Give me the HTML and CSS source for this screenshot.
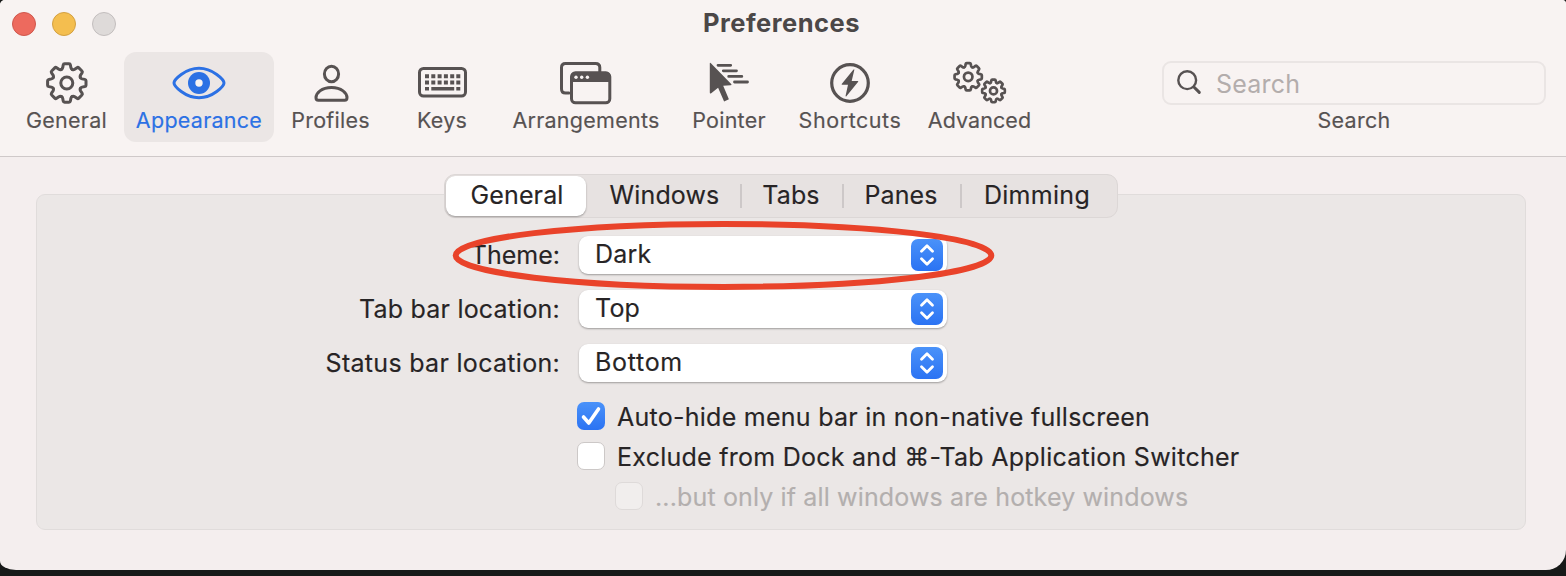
FILE: index.html
```html
<!DOCTYPE html>
<html lang="en">
<head>
<meta charset="utf-8">
<title>Preferences</title>
<link rel="stylesheet" href="styles.css">
</head>
<body>
<svg class="defs" aria-hidden="true">
  <defs>
    <path id="tooth" d="M-5.59-13.49Q-4.4-14-4.1-15.3L-3.6-18Q-3.4-19.2-2.2-19.2H2.2Q3.4-19.2 3.6-18L4.1-15.3Q4.4-14 5.59-13.49"/>
    <g id="gear">
      <use href="#tooth"/><use href="#tooth" transform="rotate(45)"/><use href="#tooth" transform="rotate(90)"/><use href="#tooth" transform="rotate(135)"/>
      <use href="#tooth" transform="rotate(180)"/><use href="#tooth" transform="rotate(225)"/><use href="#tooth" transform="rotate(270)"/><use href="#tooth" transform="rotate(315)"/>
      <circle r="6"/>
    </g>
  </defs>
</svg>
<div class="window">
  <header class="toolbar">
    <div class="titlebar">
      <div class="lights"><i class="light close"></i><i class="light minimize"></i><i class="light zoom"></i></div>
      <h1 class="title">Preferences</h1>
    </div>
    <nav class="items">
      <div class="item">
        <svg width="56" height="48" viewBox="-28 -24 56 48"><g class="line" stroke-width="3"><use href="#gear" x="-.2"/></g></svg>
        <span class="label">General</span>
      </div>
      <div class="item active">
        <svg width="60" height="48" viewBox="0 0 60 48"><path class="line" stroke-width="3" d="M5 24C5 21 16 9.300 30 9.300S55 21 55 24 44 38.700 30 38.700 5 27 5 24Z"/><circle class="solid" cx="30" cy="24" r="11"/><circle class="hole" cx="30" cy="24" r="3.700"/></svg>
        <span class="label">Appearance</span>
      </div>
      <div class="item">
        <svg width="48" height="48" viewBox="0 0 48 48"><ellipse class="line" stroke-width="3" cx="24.500" cy="15" rx="7.100" ry="7.700"/><path class="line" stroke-width="3" d="M11.300 41.300C9.700 41.300 9 40.300 9 38.700 9 34 14.500 28.500 24.500 28.500S40 34 40 38.700C40 40.300 39.300 41.300 37.700 41.300Z"/></svg>
        <span class="label">Profiles</span>
      </div>
      <div class="item">
        <svg width="56" height="48" viewBox="0 0 56 48"><rect class="line" stroke-width="3" x="5.500" y="9.500" width="46" height="27.500" rx="4"/><path class="solid" d="M11 15.300h4v4h-4zM17.300 15.300h4v4h-4zM23.600 15.300h4v4h-4zM29.900 15.300h4v4h-4zM36.200 15.300h4v4h-4zM42.300 15.300h4v4h-4zM11 21.500h4v4h-4zM17.300 21.500h4v4h-4zM23.600 21.500h4v4h-4zM29.900 21.500h4v4h-4zM36.200 21.500h4v4h-4zM42.300 21.500h4v4h-4zM11 28h4v3.600h-4zM17.300 28h22.900v3.600H17.300zM42.300 28h4v3.600h-4z"/></svg>
        <span class="label">Keys</span>
      </div>
      <div class="item">
        <svg width="56" height="48" viewBox="0 0 56 48"><path class="line" stroke-width="3" d="M11 34H7.500Q3.500 34 3.500 30V8.500Q3.500 4.500 7.500 4.500H37.500Q41.800 4.500 41.800 8.500V13"/><rect class="line" stroke-width="3" x="13.500" y="13.800" width="38.300" height="30" rx="4"/><path class="solid" d="M13 23V17q0-4 4-4H48q4 0 4 4V23Z"/><circle class="hole" cx="18" cy="18.200" r="1.700"/><circle class="hole" cx="23.700" cy="18.200" r="1.700"/><circle class="hole" cx="29.400" cy="18.200" r="1.700"/></svg>
        <span class="label">Arrangements</span>
      </div>
      <div class="item">
        <svg width="56" height="48" viewBox="0.5 0 56 48"><path class="solid" d="M9.300 4.600Q9.300 3.300 10.400 4.300L30.700 25Q31.700 26.200 30 26.300L22.700 26.800 28.400 40.200 23.600 42.600 17.600 28.700 10.700 34.300Q9.300 35 9.300 33.500Z"/><path class="line" stroke-width="2.800" d="M17.500 6.300H30.200M22.800 11.800H36M28.200 17.400H41.300M34 23H47"/></svg>
        <span class="label">Pointer</span>
      </div>
      <div class="item">
        <svg width="48" height="48" viewBox="0 0 48 48"><circle class="line" stroke-width="3.200" cx="24" cy="24" r="18.300"/><path class="solid" d="M28.300 11Q28.500 9.700 27.300 10.800L15.700 25Q15.300 25.800 16.200 25.800H22L19.600 36.700Q19.500 38 20.600 36.900L32.200 22.800Q32.600 22 31.700 22H25.700Z"/></svg>
        <span class="label l-shortcuts">Shortcuts</span>
      </div>
      <div class="item">
        <svg width="60" height="48" viewBox="0.7 0 60 48"><g class="line" stroke-width="3.800"><use href="#gear" transform="translate(18.900 17.800) scale(.71)"/><use href="#gear" transform="translate(44.200 31.900) scale(.59)" stroke-width="4.500"/></g></svg>
        <span class="label l-advanced">Advanced</span>
      </div>
      <div class="search">
        <div class="field">
          <svg width="30" height="30" viewBox="0 0 30 30"><circle class="line" stroke-width="2.400" cx="11.200" cy="12.200" r="8.900"/><path class="line" stroke-width="3" d="M17.900 19 23.300 24.400"/></svg>
          <span class="placeholder">Search</span>
        </div>
        <span class="label">Search</span>
      </div>
    </nav>
  </header>
  <main class="content">
    <section class="group">
      <div class="tabs">
        <span class="tab selected">General</span>
        <span class="tab windows">Windows</span>
        <span class="tab">Tabs</span>
        <span class="tab">Panes</span>
        <span class="tab dimming">Dimming</span>
      </div>
      <div class="form">
        <div class="row"><span class="name">Theme:</span>
          <div class="select"><span class="value">Dark</span><svg class="stepper" width="32" height="32" viewBox="0 0 32 32"><path d="M10.500 12.200 16 6.700 21.500 12.200M10.500 19.800 16 25.300 21.500 19.800"/></svg></div>
        </div>
        <div class="row"><span class="name n-tab">Tab bar location:</span>
          <div class="select"><span class="value">Top</span><svg class="stepper" width="32" height="32" viewBox="0 0 32 32"><path d="M10.500 12.200 16 6.700 21.500 12.200M10.500 19.800 16 25.300 21.500 19.800"/></svg></div>
        </div>
        <div class="row"><span class="name n-status">Status bar location:</span>
          <div class="select"><span class="value v-bottom">Bottom</span><svg class="stepper" width="32" height="32" viewBox="0 0 32 32"><path d="M10.500 12.200 16 6.700 21.500 12.200M10.500 19.800 16 25.300 21.500 19.800"/></svg></div>
        </div>
      </div>
      <div class="checks">
        <div class="check"><span class="box checked"><svg width="28" height="28" viewBox="0 0 28 28"><path d="M6.500 15 11.800 21 21.500 7"/></svg></span><span class="text">Auto-hide menu bar in non-native fullscreen</span></div>
        <div class="check"><span class="box"></span><span class="text">Exclude from Dock and <span class="cmd">⌘</span>-Tab Application Switcher</span></div>
        <div class="check disabled"><span class="box"></span><span class="text">...but only if all windows are hotkey windows</span></div>
      </div>
    </section>
  </main>
  <svg class="annotation" width="546" height="74" viewBox="0 0 546 74"><ellipse cx="273.500" cy="37.400" rx="267.800" ry="31.500"/></svg>
</div>
</body>
</html>
```
FILE: styles.css
```css
* { box-sizing: border-box; }
body { margin: 0; height: 576px; overflow: hidden; background: #171918; font-family: Inter, "Liberation Sans", sans-serif; color: #272425; }
.defs { position: absolute; width: 0; height: 0; }
.window { position: relative; height: 570px; overflow: hidden; background: #f4eeee; border-radius: 5px 4px 20px 16px / 5px 4px 20px 9px; }
svg { display: block; flex: none; }
.line { fill: none; stroke: currentColor; stroke-linecap: round; stroke-linejoin: round; }
.solid { fill: currentColor; }
.hole { fill: #f8f3f2; }

.toolbar { height: 157px; background: #f8f3f2; border-bottom: 1.5px solid #cfc9c9; color: #575252; }
.titlebar { height: 52px; display: grid; grid-template-columns: 1fr auto 1fr; padding: 0 15px 0 12px; }
.lights { display: flex; gap: 16px; padding-top: 12px; }
.light { width: 24px; height: 24px; border-radius: 50%; border: 1px solid; }
.close { background: #ed6a5e; border-color: #cf574d; }
.minimize { background: #f4be4f; border-color: #d3a042; }
.zoom { background: #dedad9; border-color: #c3bebe; }
.title { margin: 0; font-size: 25.500px; line-height: 46px; font-weight: 700; letter-spacing: .5px; color: #4b4747; white-space: nowrap; }

.items { display: grid; grid-template-columns: 115px 150px 113px 110px 178px 108px 134px 125px 1fr; padding: 0 20px 0 9px; }
.item { height: 90px; display: flex; flex-direction: column; align-items: center; padding-top: 7px; border-radius: 12px; white-space: nowrap; }
.item.active { background: #ebe6e5; color: #2c71e4; }
.label { font-size: 21.500px; line-height: 26px; letter-spacing: .26px; -webkit-text-stroke: .15px currentColor; }
.l-shortcuts { letter-spacing: .55px; }
.l-advanced { letter-spacing: .08px; }
.search { display: flex; flex-direction: column; align-items: center; padding: 9px 0 0 120px; }
.field { width: 100%; height: 44px; margin-bottom: 2px; display: flex; align-items: center; padding-left: 12px; border: 2px solid #eae5e4; border-radius: 9px; }
.placeholder { margin-left: 10px; padding-top: 2px; font-size: 25px; letter-spacing: .2px; color: #b3adac; }

.content { padding: 37px 40px 0 36px; }
.group { height: 336px; background: #ebe7e6; border: 1px solid #e0dcdb; border-radius: 9px; font-size: 25px; white-space: nowrap; -webkit-text-stroke: .15px currentColor; }
.tabs { width: 674px; height: 44px; margin: -21px 0 0 407px; display: grid; grid-template-columns: 140px 154px 102px 118px 154px; padding: 1px; background: #e7e2e1; border: 1px solid #dcd7d6; border-radius: 11px; letter-spacing: .13px; }
.tab { height: 40px; display: flex; align-items: center; justify-content: center; padding-bottom: 2px; background: linear-gradient(#cdc8c8, #cdc8c8) left center / 2px 24px no-repeat; }
.tab.windows { padding-left: 3px; background: none; }
.tab.dimming { letter-spacing: .3px; }
.tab.selected { padding-left: 2px; background: #fff; border-radius: 9px; box-shadow: 0 1px 2px #0005; }
.form { padding-top: 18px; display: grid; gap: 16px; }
.row { height: 38px; display: grid; grid-template-columns: 523px 368px; column-gap: 19px; align-items: center; }
.name { justify-self: end; }
.n-tab { letter-spacing: .2px; }
.n-status { letter-spacing: .3px; }
.select { height: 38px; display: flex; align-items: center; justify-content: space-between; padding: 0 4px 0 16px; background: #fff; border-radius: 9px; box-shadow: 0 1px 2px #0005; }
.value { padding-bottom: 2px; letter-spacing: .2px; }
.v-bottom { letter-spacing: .7px; }
.stepper { border-radius: 7px; background: linear-gradient(#4a92f9, #2b73f3); }
.stepper path, .checked path { fill: none; stroke: #fff; stroke-width: 2.800px; stroke-linecap: round; stroke-linejoin: round; }
.checked path { stroke-width: 3.600px; }
.checks { padding: 20px 0 0 540px; display: grid; gap: 12px; }
.check { height: 28px; display: flex; align-items: center; gap: 12px; letter-spacing: .26px; }
.text { padding-top: 2px; }
.check.disabled { padding-left: 38px; color: #b3afae; letter-spacing: .14px; }
.box { width: 28px; height: 28px; flex: none; border-radius: 7px; background: #fff; border: 1px solid #ccc8c7; }
.box.checked { border: 0; background: linear-gradient(#4a92f9, #2b73f3); }
.disabled .box { background: #f1eeed; border-color: #dedad9; }
.cmd { font-family: "DejaVu Sans", sans-serif; line-height: 1; }

.annotation { position: absolute; left: 450px; top: 218px; fill: none; stroke: #e9432a; stroke-width: 6px; }
```
